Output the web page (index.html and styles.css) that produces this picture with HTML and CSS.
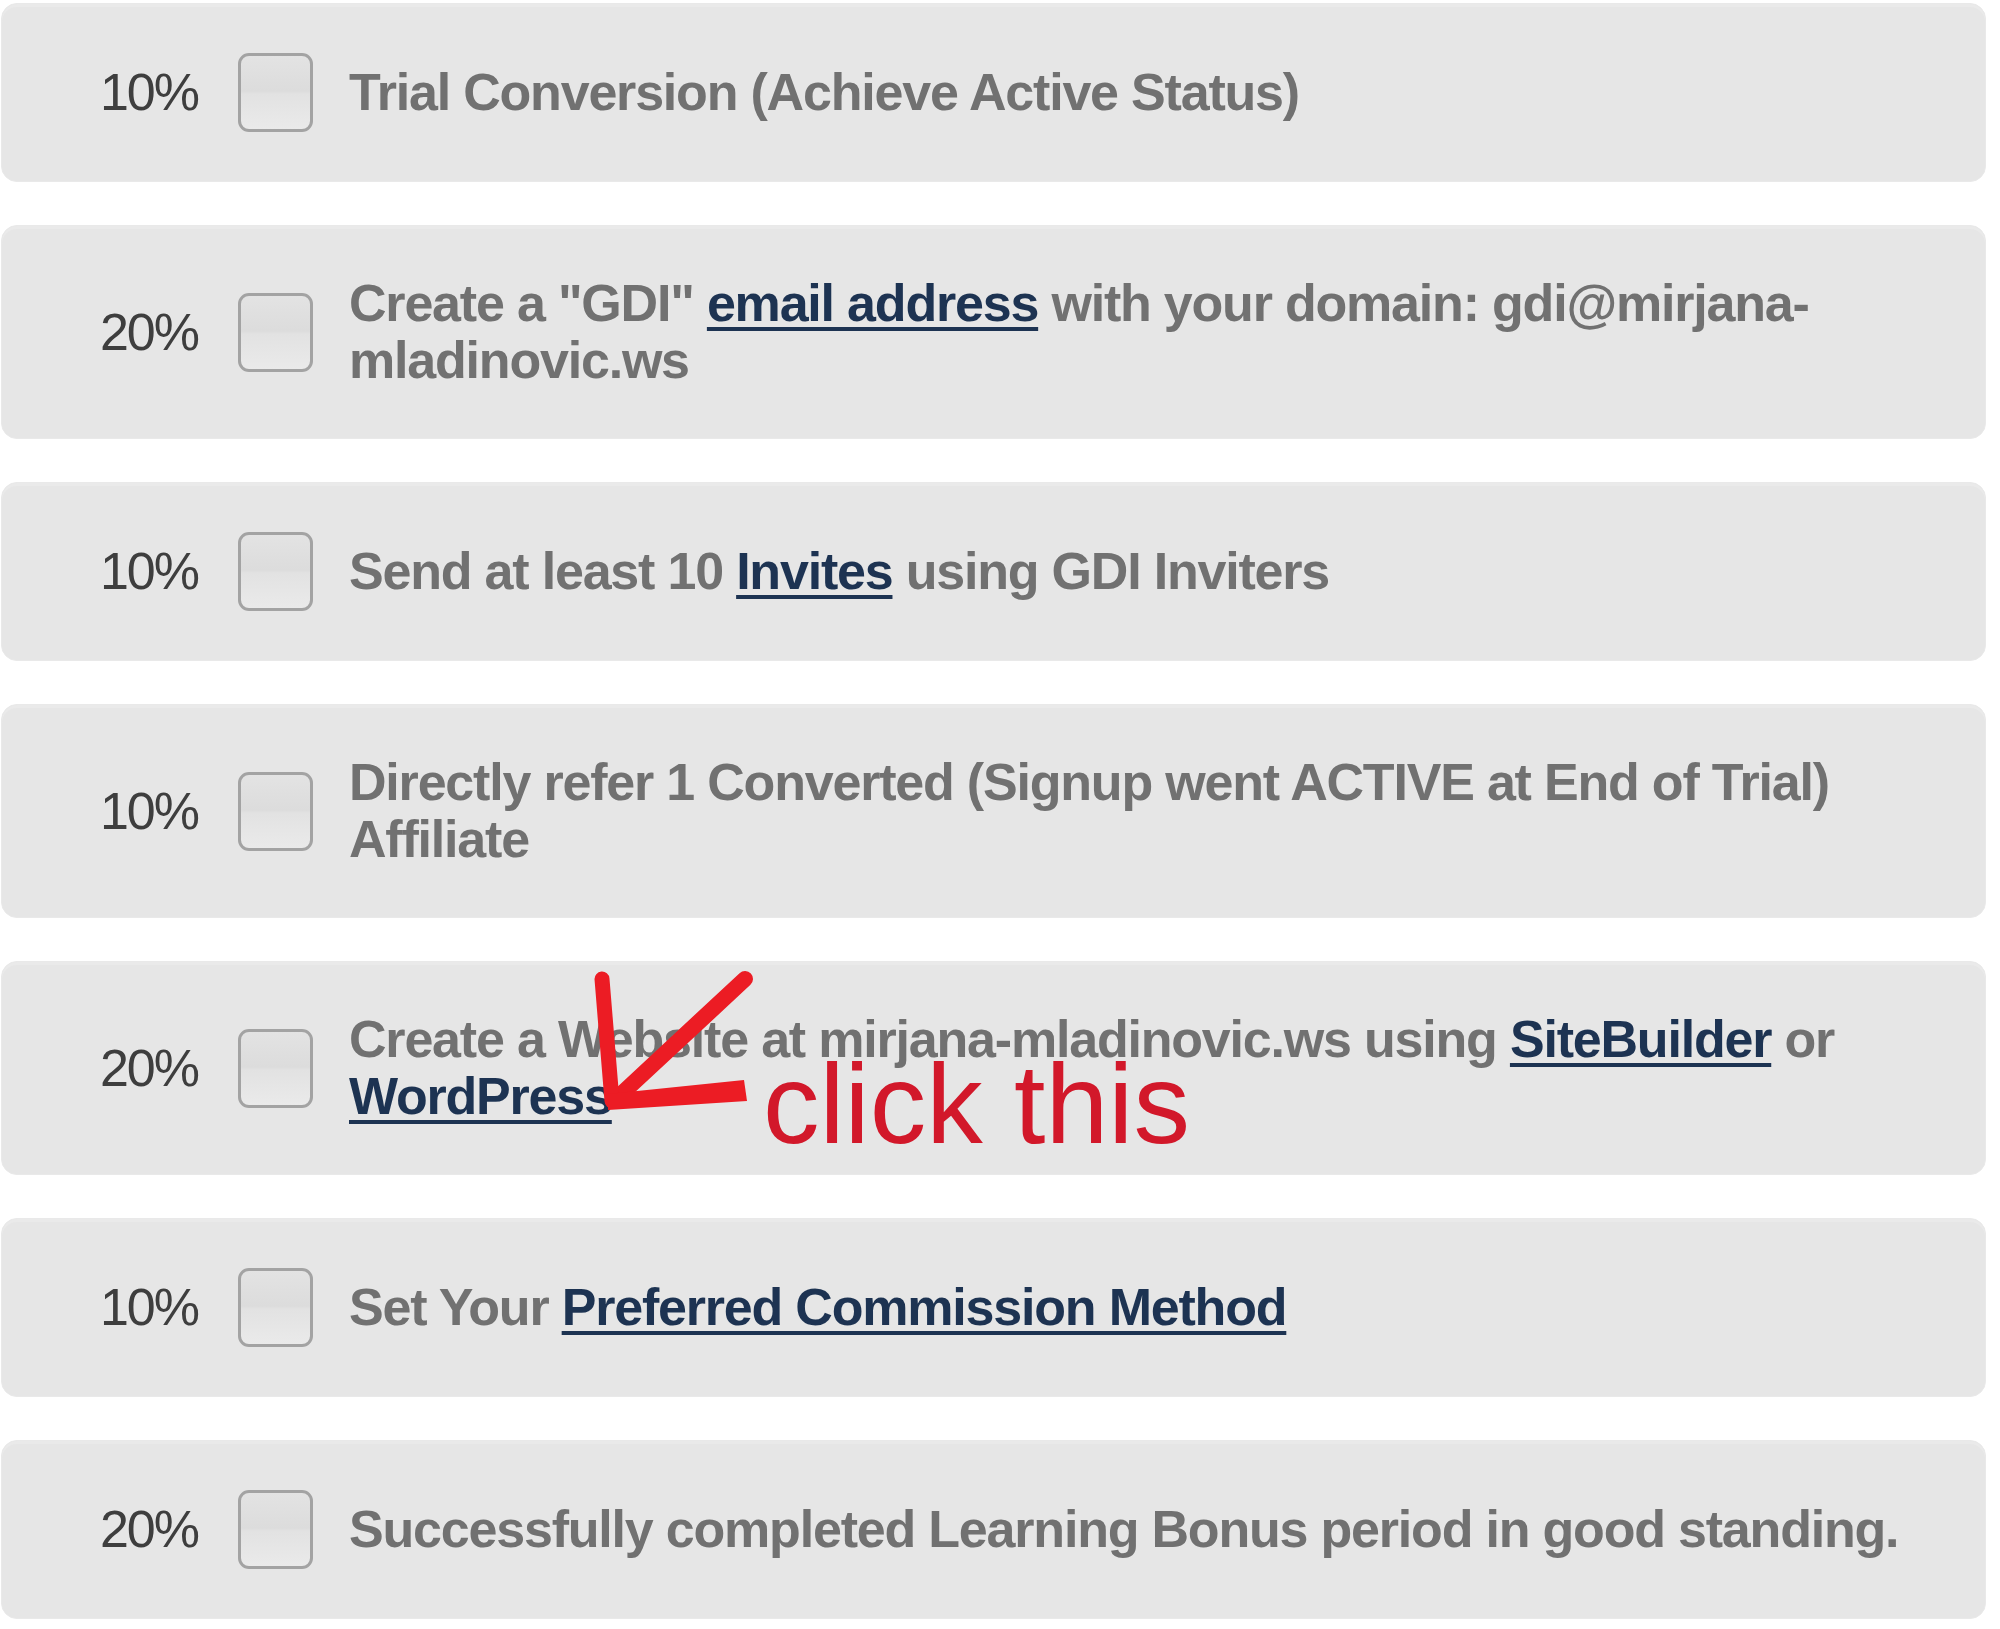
FILE: index.html
```html
<!DOCTYPE html>
<html>
<head>
<meta charset="utf-8">
<title>Learning Bonus Tasks</title>
<link rel="stylesheet" href="styles.css">
</head>
<body>
<div class="tasks">
  <div class="task">
    <div class="pct">10%</div>
    <div class="check"></div>
    <div class="label">Trial Conversion (Achieve Active Status)</div>
  </div>
  <div class="task">
    <div class="pct">20%</div>
    <div class="check"></div>
    <div class="label">Create a "GDI" <a href="#">email address</a> with your domain: gdi@mirjana-mladinovic.ws</div>
  </div>
  <div class="task">
    <div class="pct">10%</div>
    <div class="check"></div>
    <div class="label">Send at least 10 <a href="#">Invites</a> using GDI Inviters</div>
  </div>
  <div class="task">
    <div class="pct">10%</div>
    <div class="check"></div>
    <div class="label">Directly refer 1 Converted (Signup went ACTIVE at End of Trial) Affiliate</div>
  </div>
  <div class="task task-annotated">
    <div class="pct">20%</div>
    <div class="check"></div>
    <div class="label">Create a Website at mirjana-mladinovic.ws using <a href="#">SiteBuilder</a> or <a href="#">WordPress</a></div>
    <svg class="arrow" width="170" height="150" viewBox="0 0 170 150">
      <line x1="153" y1="12" x2="24" y2="132" stroke="#ec1c24" stroke-width="16" stroke-linecap="round"/>
      <line x1="10" y1="12" x2="20" y2="134" stroke="#ec1c24" stroke-width="15" stroke-linecap="round"/>
      <polygon points="16,127 152,113 155,134 16,143" fill="#ec1c24"/>
    </svg>
    <div class="note">click this</div>
  </div>
  <div class="task">
    <div class="pct">10%</div>
    <div class="check"></div>
    <div class="label">Set Your <a href="#">Preferred Commission Method</a></div>
  </div>
  <div class="task">
    <div class="pct">20%</div>
    <div class="check"></div>
    <div class="label">Successfully completed Learning Bonus period in good standing.</div>
  </div>
</div>
</body>
</html>
```

FILE: styles.css
```css
html, body {
  margin: 0;
  padding: 0;
  background: #ffffff;
}

body {
  width: 2000px;
  height: 1629px;
  overflow: hidden;
  font-family: "Liberation Sans", Arial, sans-serif;
}

.tasks {
  display: flex;
  flex-direction: column;
  gap: 43px;
  padding: 3px 0 0 1px;
  width: 1985px;
}

.task {
  display: flex;
  align-items: center;
  box-sizing: border-box;
  min-height: 179px;
  padding: 49px 60px 49px 0;
  background: #e6e6e6;
  border: 1px solid #e9e9e9;
  border-radius: 16px;
  box-shadow: inset 0 3px 0 #eaeaea;
}

.task-annotated {
  position: relative;
}

.pct {
  width: 198px;
  flex-shrink: 0;
  text-align: right;
  font-size: 52px;
  letter-spacing: -2px;
  line-height: 57px;
  color: #3e3e3e;
  box-sizing: border-box;
  padding-right: 2px;
}

.check {
  flex-shrink: 0;
  width: 75px;
  height: 79px;
  box-sizing: border-box;
  margin-left: 38px;
  margin-right: 36px;
  border: 3px solid #a3a3a3;
  border-radius: 11px;
  background: linear-gradient(to bottom, #e3e3e3 0%, #dcdcdc 48%, #e2e2e2 52%, #eaeaea 100%);
}

.label {
  flex: 1;
  font-size: 52px;
  font-weight: bold;
  letter-spacing: -1.2px;
  line-height: 57px;
  color: #717171;
}

.label a {
  color: #1d3352;
  text-decoration: underline;
  text-decoration-thickness: 4px;
  text-underline-offset: 6px;
}

.arrow {
  position: absolute;
  left: 590px;
  top: 5px;
}

.note {
  position: absolute;
  left: 761px;
  top: 86px;
  font-family: "Liberation Sans", Arial, sans-serif;
  font-size: 113px;
  line-height: 1;
  color: #d2182a;
  white-space: nowrap;
}
```
